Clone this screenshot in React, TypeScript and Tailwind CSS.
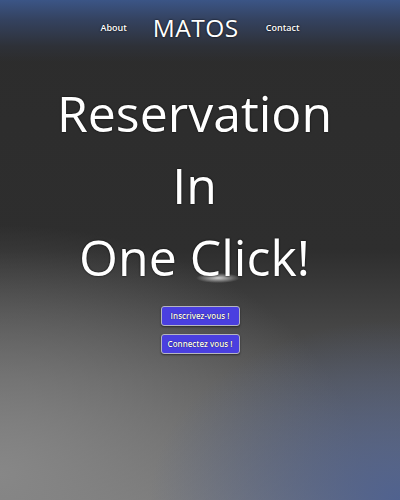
export default function App() {
  return (
    <div className="relative w-[400px] h-[500px] overflow-hidden font-['Open_Sans',sans-serif] text-white bg-[#2c2c2c] bg-[radial-gradient(ellipse_22px_5px_at_218px_278px,rgba(255,255,255,0.75),transparent),radial-gradient(ellipse_250px_180px_at_100%_100%,#50628f,transparent),radial-gradient(ellipse_360px_250px_at_0%_95%,#878787,transparent),linear-gradient(to_bottom,#3b5586_0px,#34425f_20px,#2e3138_46px,rgba(44,44,44,0)_62px),linear-gradient(to_bottom,#2c2c2c_0px,#2e2e2e_250px,#555555_380px,#737373_500px)]">
      <nav className="flex items-center justify-center pt-[12px] [text-shadow:0_0_2px_#000]">
        <a className="text-[9px] font-semibold mr-[26px]">About</a>
        <span className="text-[24.5px] leading-[32px] tracking-[0.5px]">MATOS</span>
        <a className="text-[9px] font-semibold ml-[27px]">Contact</a>
      </nav>
      <main className="flex flex-col items-center pt-[33px]">
        <h1 className="pr-[11px] text-[50px] leading-[72px] text-center [text-shadow:0_0_2px_#000]">
          Reservation
          <br />
          In
          <br />
          One Click!
        </h1>
        <div className="flex flex-col gap-[8px] mt-[13px]">
          <button className="w-[79px] h-[20px] rounded-[3px] border border-[#b5b5c0] bg-[#4a3fe0] text-[8px] font-semibold [text-shadow:0_0_1px_#000] shadow-[0_1px_2px_rgba(0,0,0,0.5)]">
            Inscrivez-vous !
          </button>
          <button className="w-[79px] h-[20px] rounded-[3px] border border-[#b5b5c0] bg-[#4a3fe0] text-[8px] font-semibold [text-shadow:0_0_1px_#000] shadow-[0_1px_2px_rgba(0,0,0,0.5)]">
            Connectez vous !
          </button>
        </div>
      </main>
    </div>
  );
}
